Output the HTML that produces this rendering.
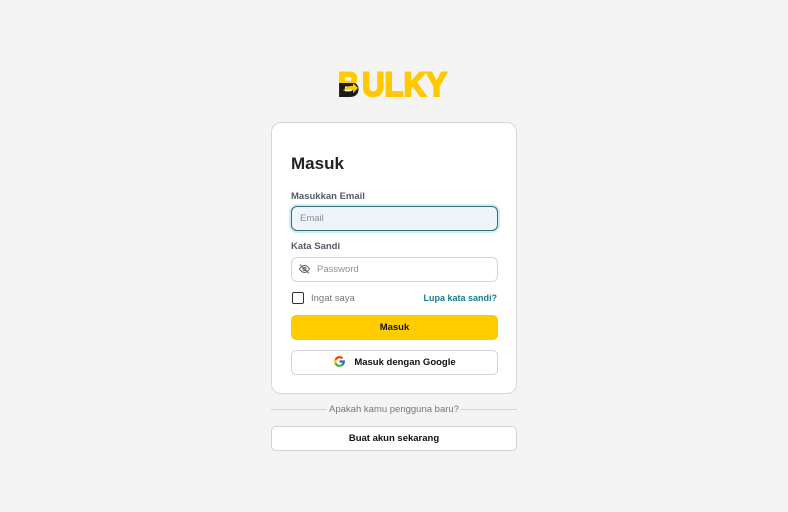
<!DOCTYPE html>
<html><head><meta charset="utf-8"><style>
*{box-sizing:border-box;margin:0;padding:0}
body{width:788px;height:512px;background:#f4f4f4;font-family:"Liberation Sans",sans-serif;position:relative;overflow:hidden}
.logo{position:absolute;left:337px;top:66px}
.card{position:absolute;left:271px;top:122px;width:246px;height:272px;background:#fff;border:1px solid #d8d8dc;border-radius:10px}
h1{position:absolute;left:19px;top:31px;font-size:17px;font-weight:bold;color:#222}
.lbl{position:absolute;left:19px;font-size:9.5px;color:#555b66;font-weight:600}
.inp{position:absolute;left:19px;width:207px;height:25px;border:1px solid #d3d5da;border-radius:6px;font-size:9.5px;color:#8a8f98;padding-left:8px;line-height:23px}
.email{top:83px;background:#eff4f8;border:1.5px solid #3d6b72;box-shadow:0 0 0 2px #c9f0f5}
.pw{top:134px;padding-left:25px}
.cb{position:absolute;left:20px;top:169px;width:12px;height:12px;border:1.5px solid #333;border-radius:2px}
.btn{position:absolute;left:19px;width:207px;height:25px;border-radius:5px;font-size:9.5px;font-weight:bold;color:#111;text-align:center;line-height:25px}
.y{top:192px;background:#ffcc00}
.g{top:227px;background:#fff;border:1px solid #cfd2d6;line-height:23px}
.or{position:absolute;left:271px;top:404px;width:246px;font-size:9.5px;color:#777;text-align:center}
.line{position:absolute;top:409px;height:1px;background:#d4d4d4}
.buat{position:absolute;left:271px;top:426px;width:246px;height:25px;background:#fff;border:1px solid #cfd2d6;border-radius:5px;font-size:9.5px;font-weight:bold;text-align:center;line-height:23px;color:#111}
</style></head><body>
<svg class="logo" width="115" height="34" viewBox="0 0 115 34">
<defs><linearGradient id="gy" x1="0" y1="0" x2="0" y2="1"><stop offset="0" stop-color="#ffd21f"/><stop offset="1" stop-color="#f5b800"/></linearGradient>
<clipPath id="top"><rect x="0" y="0" width="30" height="17"/></clipPath>
<clipPath id="bot"><rect x="0" y="17" width="30" height="20"/></clipPath></defs>
<g style="font-family:'Liberation Sans',sans-serif;font-weight:bold;font-size:34px">
<text x="1" y="30" fill="#ffcc00" stroke="#ffcc00" stroke-width="2" clip-path="url(#top)" textLength="21" lengthAdjust="spacingAndGlyphs">B</text>
<text x="1" y="30" fill="#1b1b1b" stroke="#1b1b1b" stroke-width="2" clip-path="url(#bot)" textLength="21" lengthAdjust="spacingAndGlyphs">B</text>
<path d="M6 25 q4 -6 10 -5 l0 -3 5 5 -5 5 0 -3 q-5 -1 -10 1z" fill="#ffcc00"/>
<text x="25" y="30" fill="#ffc800" stroke="#ffc800" stroke-width="2" textLength="85" lengthAdjust="spacingAndGlyphs">ULKY</text>
</g>
</svg>
<div class="card">
<h1>Masuk</h1>
<div class="lbl" style="top:68px">Masukkan Email</div>
<div class="inp email">Email</div>
<div class="lbl" style="top:118px">Kata Sandi</div>
<div class="inp pw">Password</div>
<svg style="position:absolute;left:26px;top:140px" width="13" height="12" viewBox="0 0 24 24" fill="none" stroke="#666" stroke-width="2"><path d="M2 12s4-7 10-7 10 7 10 7-4 7-10 7S2 12 2 12z"/><circle cx="12" cy="12" r="3"/><path d="M3 3l18 18"/></svg>
<div class="cb"></div>
<div class="lbl" style="left:39px;top:170px;color:#777;font-weight:normal">Ingat saya</div>
<div class="lbl" style="left:auto;right:19px;top:170px;color:#16808a;font-weight:bold;font-size:9px">Lupa kata sandi?</div>
<div class="btn y">Masuk</div>
<div class="btn g"><svg style="vertical-align:-3px;margin-right:8px" width="13" height="13" viewBox="0 0 48 48"><path fill="#FFC107" d="M43.6 20H24v8h11.3C33.7 32.7 29.2 36 24 36c-6.6 0-12-5.4-12-12s5.4-12 12-12c3 0 5.8 1.1 7.9 3l5.7-5.7C34 6.1 29.3 4 24 4 13 4 4 13 4 24s9 20 20 20 20-9 20-20c0-1.3-.1-2.7-.4-4z"/><path fill="#FF3D00" d="M6.3 14.7l6.6 4.8C14.7 15.1 19 12 24 12c3 0 5.8 1.1 7.9 3l5.7-5.7C34 6.1 29.3 4 24 4 16.3 4 9.7 8.3 6.3 14.7z"/><path fill="#4CAF50" d="M24 44c5.2 0 9.9-2 13.4-5.2l-6.2-5.2C29.2 35.1 26.7 36 24 36c-5.2 0-9.6-3.3-11.3-8l-6.5 5C9.5 39.6 16.2 44 24 44z"/><path fill="#1976D2" d="M43.6 20H24v8h11.3c-.8 2.2-2.2 4.2-4.1 5.6l6.2 5.2C37 39.2 44 34 44 24c0-1.3-.1-2.7-.4-4z"/></svg>Masuk dengan Google</div>
</div>
<div class="line" style="left:271px;width:56px"></div>
<div class="line" style="left:461px;width:56px"></div>
<div class="or">Apakah kamu pengguna baru?</div>
<div class="buat">Buat akun sekarang</div>
</body></html>
